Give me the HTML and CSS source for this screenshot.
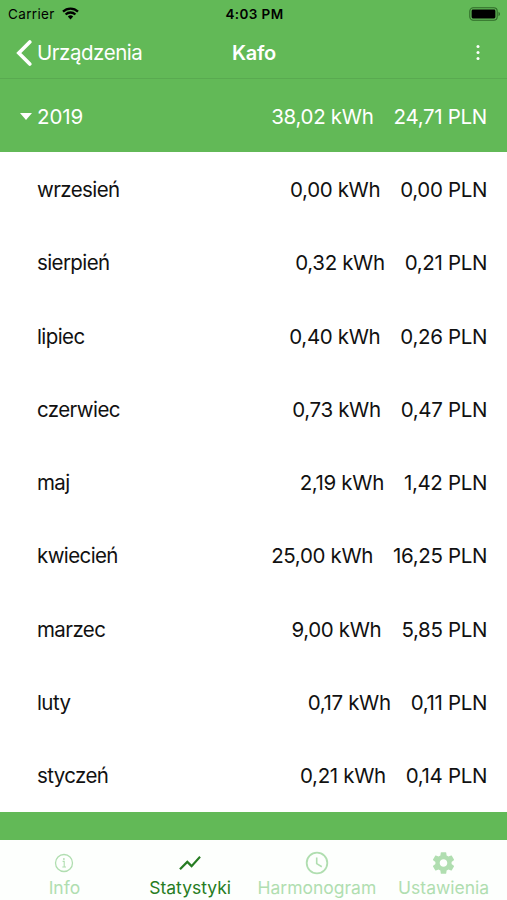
FILE: index.html
```html
<!DOCTYPE html>
<html lang="pl">
    <head>
        <meta charset="UTF-8">
        <title>Kafo</title>
        <link rel="stylesheet" href="styles.css">
    </head>
    <body>
        <header>
            <div class="status-bar">
                <div class="carrier">
                    <span>Carrier</span>
                    <svg width="17" height="13" viewBox="0 0 17 13" fill="none" stroke="#000" stroke-width="2.3">
                        <path d="M1 4.6a10.8 10.8 0 0 1 15 0M3.6 7.5a7 7 0 0 1 9.8 0"/>
                        <path d="M8.5 12.4L5.8 9.6a4 4 0 0 1 5.4 0z" fill="#000" stroke="none"/>
                    </svg>
                </div>
                <span class="time">4:03 PM</span>
                <svg class="battery" width="32" height="14" viewBox="0 0 32 14">
                    <rect x=".8" y=".8" width="27.4" height="12.4" rx="3.5" fill="none" stroke="#2f6a29" stroke-width="1.1"/>
                    <rect x="2.6" y="2.6" width="23.8" height="8.8" rx="1.3"/>
                    <path d="M29.5 4.8c2 .8 2 3.6 0 4.4z" fill="#2f6a29"/>
                </svg>
            </div>
            <nav class="nav-bar">
                <a class="back" href="#">
                    <svg width="16" height="26" viewBox="0 0 16 26" fill="none" stroke="#fff" stroke-width="3.6" stroke-linecap="round">
                        <path d="M13.8 2L2.8 13l11 11"/>
                    </svg>
                    <span>Urządzenia</span>
                </a>
                <h1>Kafo</h1>
                <svg class="more" width="4" height="18" viewBox="0 0 4 18" fill="#fff">
                    <circle cx="2" cy="2.5" r="1.5"/>
                    <circle cx="2" cy="8.5" r="1.5"/>
                    <circle cx="2" cy="14.5" r="1.5"/>
                </svg>
            </nav>
        </header>

        <main>
            <div class="row year">
                <span class="arrow"></span>
                <span class="name">2019</span>
                <span>38,02 kWh</span>
                <span class="price">24,71 PLN</span>
            </div>
            <div class="months">
                <div class="row"><span class="name">wrzesień</span><span>0,00 kWh</span><span class="price">0,00 PLN</span></div>
                <div class="row"><span class="name">sierpień</span><span>0,32 kWh</span><span class="price">0,21 PLN</span></div>
                <div class="row"><span class="name">lipiec</span><span>0,40 kWh</span><span class="price">0,26 PLN</span></div>
                <div class="row"><span class="name">czerwiec</span><span>0,73 kWh</span><span class="price">0,47 PLN</span></div>
                <div class="row"><span class="name">maj</span><span>2,19 kWh</span><span class="price">1,42 PLN</span></div>
                <div class="row"><span class="name">kwiecień</span><span>25,00 kWh</span><span class="price">16,25 PLN</span></div>
                <div class="row"><span class="name">marzec</span><span>9,00 kWh</span><span class="price">5,85 PLN</span></div>
                <div class="row"><span class="name">luty</span><span>0,17 kWh</span><span class="price">0,11 PLN</span></div>
                <div class="row"><span class="name">styczeń</span><span>0,21 kWh</span><span class="price">0,14 PLN</span></div>
            </div>
        </main>

        <footer class="tabs">
            <a class="tab" href="#">
                <svg width="24" height="24" viewBox="0 0 24 24" fill="none" stroke="currentColor">
                    <circle cx="12" cy="12" r="8.5" stroke-width="1.3"/>
                    <path d="M10.6 10.4H12.2V15.9M10.3 16H14" stroke-width="1.1"/>
                    <circle cx="11.9" cy="8" r=".9" fill="currentColor" stroke="none"/>
                </svg>
                <span>Info</span>
            </a>
            <a class="tab active" href="#">
                <svg width="26" height="26" viewBox="0 0 24 24" fill="currentColor">
                    <path d="M3.5 18.49l6-6.01 4 4L22 6.92l-1.41-1.41-7.09 7.97-4-4L2 16.99z"/>
                </svg>
                <span>Statystyki</span>
            </a>
            <a class="tab" href="#">
                <svg width="24" height="24" viewBox="0 0 24 24" fill="none" stroke="currentColor" stroke-width="1.8">
                    <circle cx="12" cy="12" r="10.3"/>
                    <path d="M11.7 6.5V12.6L16.8 15.7" stroke-width="1.6"/>
                </svg>
                <span>Harmonogram</span>
            </a>
            <a class="tab" href="#">
                <svg width="27" height="27" viewBox="0 0 24 24" fill="currentColor">
                    <path d="M19.43 12.98c.04-.32.07-.64.07-.98s-.03-.66-.07-.98l2.11-1.65c.19-.15.24-.42.12-.64l-2-3.46c-.12-.22-.39-.3-.61-.22l-2.49 1c-.52-.4-1.08-.73-1.69-.98l-.38-2.65A.488.488 0 0 0 14 2h-4c-.25 0-.46.18-.49.42l-.38 2.65c-.61.25-1.17.59-1.69.98l-2.49-1c-.23-.09-.49 0-.61.22l-2 3.46c-.13.22-.07.49.12.64l2.11 1.65c-.04.32-.07.65-.07.98s.03.66.07.98l-2.11 1.65c-.19.15-.24.42-.12.64l2 3.46c.12.22.39.3.61.22l2.49-1c.52.4 1.08.73 1.69.98l.38 2.65c.03.24.24.42.49.42h4c.25 0 .46-.18.49-.42l.38-2.65c.61-.25 1.17-.59 1.69-.98l2.49 1c.23.09.49 0 .61-.22l2-3.46c.12-.22.07-.49-.12-.64zM12 15.5c-1.93 0-3.5-1.57-3.5-3.5s1.57-3.5 3.5-3.5 3.5 1.57 3.5 3.5-1.57 3.5-3.5 3.5z"/>
                </svg>
                <span>Ustawienia</span>
            </a>
        </footer>
    </body>
</html>
```
FILE: styles.css
```css
body {
    font-family: Inter, "Liberation Sans", sans-serif;
    background-color: #62b957;
    margin: 0;
    height: 900px;
    display: flex;
    flex-direction: column;
    overflow: hidden;
}

a {
    text-decoration: none;
    color: inherit;
}

header {
    box-sizing: border-box;
    height: 79px;
    border-bottom: 1px solid #59aa50;
}

.status-bar {
    height: 27px;
    padding: 0 6px 0 8px;
    display: grid;
    grid-template-columns: 1fr auto 1fr;
    align-items: center;
    font-size: 13.5px;
    color: #000;
}

.carrier {
    display: flex;
    align-items: center;
    gap: 7px;
    letter-spacing: 0.35px;
}

.time {
    font-weight: 600;
    letter-spacing: 0.4px;
}

.battery {
    justify-self: end;
}

.nav-bar {
    height: 51px;
    padding: 0 27px 0 16px;
    display: grid;
    grid-template-columns: 216px auto 1fr;
    align-items: center;
    font-size: 20.5px;
    color: #fff;
}

.back {
    display: flex;
    align-items: center;
    gap: 5px;
    letter-spacing: -0.45px;
}

h1 {
    margin: 0;
    font-size: 20px;
    font-weight: 600;
    letter-spacing: -0.3px;
}

.more {
    justify-self: end;
}

.row {
    box-sizing: border-box;
    height: 73.3px;
    padding: 1px 20px 0 37px;
    display: flex;
    align-items: center;
    font-size: 20.5px;
    letter-spacing: -0.35px;
    color: #111;
}

.name {
    flex: 1;
    letter-spacing: -0.6px;
}

.price {
    margin-left: 20px;
}

.year {
    padding-left: 20px;
    letter-spacing: -0.3px;
    color: #fff;
}

.year .name {
    letter-spacing: -0.1px;
}

.arrow {
    margin-right: 5px;
    border-left: 6px solid transparent;
    border-right: 6px solid transparent;
    border-top: 7px solid #fff;
}

.months {
    background-color: #fff;
}

.tabs {
    height: 60px;
    margin-top: auto;
    display: grid;
    grid-template-columns: repeat(4, 1fr);
    background-color: #fdfffd;
    color: #b0deb0;
}

.tab {
    display: flex;
    flex-direction: column;
    align-items: center;
    font-size: 17.5px;
}

.tab:first-child {
    padding-left: 2px;
}

.tab svg {
    height: 26px;
    margin-top: 10px;
}

.tab span {
    line-height: 24px;
}

.active {
    color: #267c22;
}
```
